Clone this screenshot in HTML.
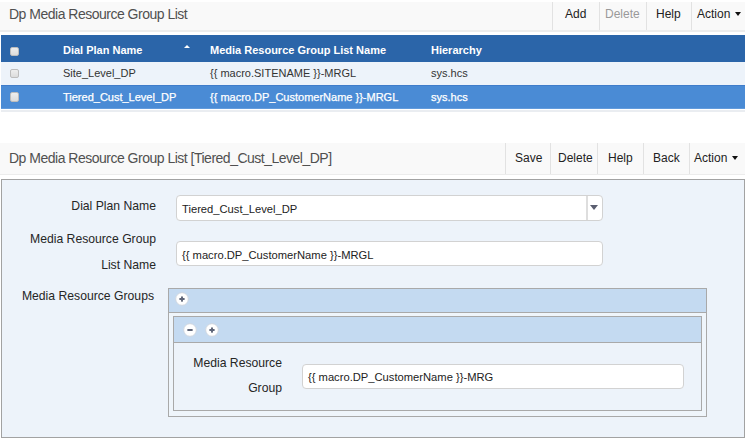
<!DOCTYPE html>
<html><head><meta charset="utf-8">
<style>
*{box-sizing:border-box;margin:0;padding:0}
html,body{width:745px;height:439px;overflow:hidden;background:#fff;font-family:"Liberation Sans",sans-serif;position:relative}
.a{position:absolute;white-space:nowrap;line-height:20px}
.tb{position:absolute;left:0;width:745px;background:#f9f9f9;border-bottom:2px solid #ececec}
.sep{position:absolute;width:1px;background:#e2e2e2}
.ttl{font-size:14px;letter-spacing:-0.5px;color:#505050}
.btn{font-size:12px;color:#222}
.dis{color:#9a9a9a}
.row{position:absolute;left:1px;width:744px}
.th{font-size:11px;font-weight:bold;color:#fff}
.td{font-size:11px;color:#333}
.tds{font-size:11px;color:#fff;-webkit-text-stroke:0.25px #fff}
.cb{position:absolute;left:9.5px;width:9.5px;height:9.5px;border:1px solid #bdbdbd;border-radius:2px;background:linear-gradient(#eeeeee,#dcdcdc)}
.lbl{font-size:12.2px;color:#262626;text-align:right}
.inp{position:absolute;background:#fff;border:1px solid #d2d2d2;border-radius:4px}
.val{font-size:11.2px;color:#222}
.circ{position:absolute;width:13px;height:13px;border-radius:50%;background:#fff;box-shadow:0 0 0 0.5px #d8dde4}
.circ i{position:absolute;background:#596072}
.ic{position:absolute}
.arr{position:absolute;width:0;height:0;border-left:4px solid transparent;border-right:4px solid transparent}
</style></head><body>

<!-- toolbar 1 -->
<div class="tb" style="top:2px;height:30px"></div>
<div class="a ttl" style="left:9px;top:4.3px">Dp Media Resource Group List</div>
<div class="sep" style="left:552px;top:2px;height:28px"></div>
<div class="sep" style="left:599px;top:2px;height:28px"></div>
<div class="sep" style="left:646px;top:2px;height:28px"></div>
<div class="sep" style="left:691px;top:2px;height:28px"></div>
<div class="a btn" style="left:565px;top:4px">Add</div>
<div class="a btn dis" style="left:605px;top:4px">Delete</div>
<div class="a btn" style="left:656px;top:4px">Help</div>
<div class="a btn" style="left:697px;top:4px">Action</div>
<div class="arr" style="left:734.5px;top:12px;border-left-width:3.5px;border-right-width:3.5px;border-top:4.5px solid #111"></div>

<!-- table -->
<div class="row" style="top:35px;height:27px;background:#2b65a9"></div>
<div class="row" style="top:62px;height:23px;background:#edf3fa"></div>
<div class="row" style="top:85px;height:24px;background:#4a8bd5;border-top:1px solid #3f7cca;border-bottom:1px solid #629bdc"></div>
<div class="row" style="top:110px;height:2px;background:#eaedf1"></div>
<div class="cb" style="top:46.5px"></div>
<div class="cb" style="top:68.5px"></div>
<div class="cb" style="top:92.3px"></div>
<div class="a th" style="left:63px;top:39.5px">Dial Plan Name</div>
<div class="arr" style="left:184.3px;top:45.3px;border-left-width:3.4px;border-right-width:3.4px;border-bottom:3.6px solid #fff"></div>
<div class="a th" style="left:210px;top:39.5px">Media Resource Group List Name</div>
<div class="a th" style="left:431px;top:39.5px">Hierarchy</div>
<div class="a td" style="left:63px;top:63px">Site_Level_DP</div>
<div class="a td" style="left:210px;top:63px">{{ macro.SITENAME }}-MRGL</div>
<div class="a td" style="left:431px;top:63px">sys.hcs</div>
<div class="a tds" style="left:63px;top:87px">Tiered_Cust_Level_DP</div>
<div class="a tds" style="left:210px;top:87px">{{ macro.DP_CustomerName }}-MRGL</div>
<div class="a tds" style="left:431px;top:87px">sys.hcs</div>

<!-- toolbar 2 -->
<div class="tb" style="top:143px;height:32px;border-bottom-width:1px"></div>
<div class="a ttl" style="left:9px;top:147.5px">Dp Media Resource Group List [Tiered_Cust_Level_DP]</div>
<div class="sep" style="left:505px;top:143px;height:31px"></div>
<div class="sep" style="left:550px;top:143px;height:31px"></div>
<div class="sep" style="left:597px;top:143px;height:31px"></div>
<div class="sep" style="left:643px;top:143px;height:31px"></div>
<div class="sep" style="left:689px;top:143px;height:31px"></div>
<div class="a btn" style="left:515px;top:148px">Save</div>
<div class="a btn" style="left:558px;top:148px">Delete</div>
<div class="a btn" style="left:608px;top:148px">Help</div>
<div class="a btn" style="left:653px;top:148px">Back</div>
<div class="a btn" style="left:694px;top:148px">Action</div>
<div class="arr" style="left:731.5px;top:155.5px;border-left-width:3.5px;border-right-width:3.5px;border-top:4.5px solid #111"></div>

<!-- form panel -->
<div style="position:absolute;left:1px;top:179px;width:744px;height:259px;background:#edf3fa;border:1px solid #a2a2a2"></div>
<div class="a lbl" style="right:589px;top:196px">Dial Plan Name</div>
<div class="inp" style="left:176px;top:195px;width:427px;height:26px"></div>
<div style="position:absolute;left:586px;top:196px;width:1.5px;height:24px;background:#dedede"></div>
<div class="arr" style="left:590px;top:204.5px;border-top:5.5px solid #5a5e70"></div>
<div class="a val" style="left:182px;top:199px">Tiered_Cust_Level_DP</div>

<div class="a lbl" style="right:589px;top:229px">Media Resource Group</div>
<div class="a lbl" style="right:589px;top:255px">List Name</div>
<div class="inp" style="left:176px;top:241px;width:427px;height:25px"></div>
<div class="a val" style="left:182px;top:245px">{{ macro.DP_CustomerName }}-MRGL</div>

<div class="a lbl" style="right:591px;top:286px">Media Resource Groups</div>

<!-- nested outer -->
<div style="position:absolute;left:168px;top:288px;width:539px;height:129px;background:#eff5fb;border:1px solid #a9a9a9"></div>
<div style="position:absolute;left:169px;top:289px;width:537px;height:24px;background:#c4daf1;border-bottom:1px solid #a9a9a9"></div>
<svg class="ic" style="left:174.4px;top:291.3px" width="16" height="16" viewBox="0 0 16 16"><circle cx="8" cy="8" r="6.3" fill="#fff" stroke="#cfd5dd" stroke-width="0.9"/><path d="M6.1 8H9.9M8 6.1V9.9" stroke="#5d6477" stroke-width="1.9" stroke-linecap="round"/></svg>

<!-- nested inner -->
<div style="position:absolute;left:173px;top:316px;width:529px;height:95px;background:#edf3fa;border:1px solid #a9a9a9"></div>
<div style="position:absolute;left:174px;top:317px;width:527px;height:26px;background:#c4daf1;border-bottom:1px solid #a9a9a9"></div>
<svg class="ic" style="left:181.9px;top:322px" width="16" height="16" viewBox="0 0 16 16"><circle cx="8" cy="8" r="6.3" fill="#fff" stroke="#cfd5dd" stroke-width="0.9"/><path d="M6.1 8H9.9" stroke="#5d6477" stroke-width="1.9" stroke-linecap="round"/></svg>
<svg class="ic" style="left:204px;top:322px" width="16" height="16" viewBox="0 0 16 16"><circle cx="8" cy="8" r="6.3" fill="#fff" stroke="#cfd5dd" stroke-width="0.9"/><path d="M6.1 8H9.9M8 6.1V9.9" stroke="#5d6477" stroke-width="1.9" stroke-linecap="round"/></svg>

<div class="a lbl" style="right:463px;top:353px">Media Resource</div>
<div class="a lbl" style="right:463px;top:378px">Group</div>
<div class="inp" style="left:302px;top:364px;width:382px;height:25px"></div>
<div class="a val" style="left:308px;top:367px">{{ macro.DP_CustomerName }}-MRG</div>

</body></html>
